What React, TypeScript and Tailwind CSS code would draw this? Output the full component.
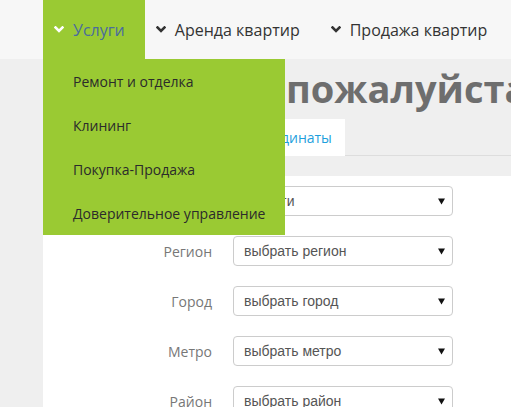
import React from 'react'

const font = { fontFamily: '"Open Sans", "Noto Sans", sans-serif' }

function Chevron({ white }: { white?: boolean }) {
  return (
    <svg width="10" height="7" viewBox="0 0 10 7" className="shrink-0">
      <polyline
        points="1.5,1.5 5,5 8.5,1.5"
        fill="none"
        stroke={white ? '#ffffff' : '#333333'}
        strokeWidth="2.6"
        strokeLinecap="square"
      />
    </svg>
  )
}

const navItems = [
  { label: 'Услуги', active: true },
  { label: 'Аренда квартир' },
  { label: 'Продажа квартир' },
]

const submenu = ['Ремонт и отделка', 'Клининг', 'Покупка-Продажа', 'Доверительное управление']

const rows = [
  { label: 'Услуги', value: '- услуги' },
  { label: 'Регион', value: 'выбрать регион' },
  { label: 'Город', value: 'выбрать город' },
  { label: 'Метро', value: 'выбрать метро' },
  { label: 'Район', value: 'выбрать район' },
]

function FakeSelect({ value }: { value: string }) {
  return (
    <div className="ml-[21px] w-[220px] h-[30px] shrink-0 flex items-center justify-between rounded-[4px] border border-[#cccccc] bg-white pl-[10px] pr-[7px]">
      <span className="text-[14px] text-[#555555]" style={{ fontFamily: '"Liberation Sans", Arial, sans-serif' }}>
        {value}
      </span>
      <svg width="7" height="7" viewBox="0 0 7 7">
        <polygon points="0,0.5 7,0.5 3.5,6.5" fill="#111111" />
      </svg>
    </div>
  )
}

export default function App() {
  return (
    <div className="relative min-h-screen w-full overflow-hidden bg-[#efefef]" style={font}>
      <nav className="h-[59px] bg-[#f7f7f7]">
        <div className="ml-[43px] flex h-full">
          {navItems.map((it) => (
            <div
              key={it.label}
              className={
                'flex h-full items-center whitespace-nowrap pl-[11px] pr-[20px] ' +
                (it.active ? 'bg-[#9aca33]' : '')
              }
            >
              <Chevron white={it.active} />
              <span className={'ml-[9px] text-[16px] ' + (it.active ? 'text-[#4a6c9e]' : 'text-[#333333]')}>
                {it.label}
              </span>
            </div>
          ))}
        </div>
      </nav>

      <div className="ml-[43px] w-[1100px]">
        <h1 className="flex whitespace-nowrap pt-[10px] mb-[12px] text-[38px] leading-[38px] font-bold text-[#6e6e6e]">
          <span className="w-[243px] text-right pr-[11px]">Выберите,</span>
          <span>пожалуйста, параметры</span>
        </h1>

        <div className="flex h-[37px] border-b border-[#dddddd]">
          <div className="w-[191px] flex items-center px-[13px] text-[14px] text-[#1e9fdd]">Адрес</div>
          <div className="flex items-center bg-white px-[13px] text-[14px] text-[#1e9fdd] -mb-px">Координаты</div>
        </div>

        <div className="mt-[20px] bg-white pt-[10px] pb-[20px] flex flex-col gap-[20px]">
          {rows.map((r) => (
            <div key={r.label} className="flex items-center">
              <div className="w-[169px] shrink-0 text-right text-[14px] text-[#777777]">{r.label}</div>
              <FakeSelect value={r.value} />
            </div>
          ))}
        </div>
      </div>

      <div className="absolute left-[43px] top-[59px] w-[242px] bg-[#9aca33]">
        {submenu.map((s) => (
          <div key={s} className="h-[44px] flex items-center pl-[30px] text-[14px] text-[#2b2b2b] whitespace-nowrap">
            {s}
          </div>
        ))}
      </div>
    </div>
  )
}
